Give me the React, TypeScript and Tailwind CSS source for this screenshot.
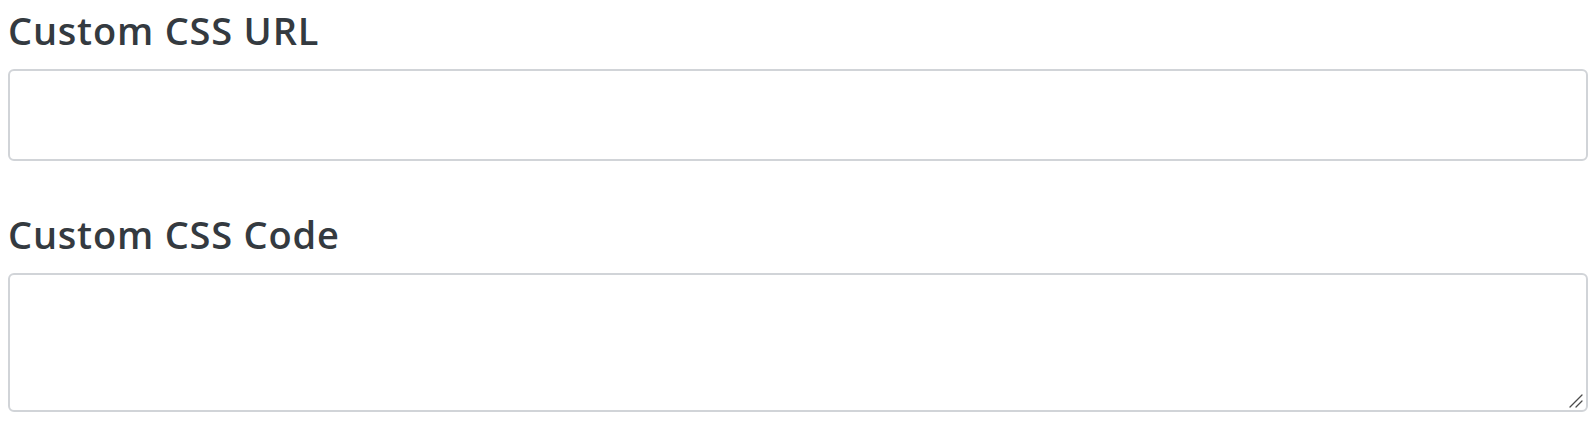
import React from 'react';

const Field: React.FC<{ label: string; multiline?: boolean }> = ({ label, multiline }) => {
  return (
    <div>
      <h2 className="text-[38px] leading-[60px] font-semibold tracking-[0.8px] text-[#343a40] mb-[9px]">{label}</h2>
      {multiline ? (
        <div className="relative">
          <textarea className="block w-full h-[139px] resize-none rounded-[6px] border-2 border-[#d1d4d8] bg-white outline-none" />
          {/* resize grip */}
          <svg className="absolute right-[5px] bottom-[4px] w-[14px] h-[14px]" viewBox="0 0 14 14">
            <path d="M1 13 L13 1 M7 13 L13 7" stroke="#4b4b4b" strokeWidth="1.3" strokeLinecap="round" />
          </svg>
        </div>
      ) : (
        <input type="text" className="block w-full h-[92px] rounded-[6px] border-2 border-[#d1d4d8] bg-white outline-none" />
      )}
    </div>
  );
};

const App: React.FC = () => {
  return (
    <div className="min-h-screen bg-white px-2 flex flex-col gap-[43px]" style={{ fontFamily: '"Open Sans", sans-serif' }}>
      <Field label="Custom CSS URL" />
      <Field label="Custom CSS Code" multiline />
    </div>
  );
};

export default App;
